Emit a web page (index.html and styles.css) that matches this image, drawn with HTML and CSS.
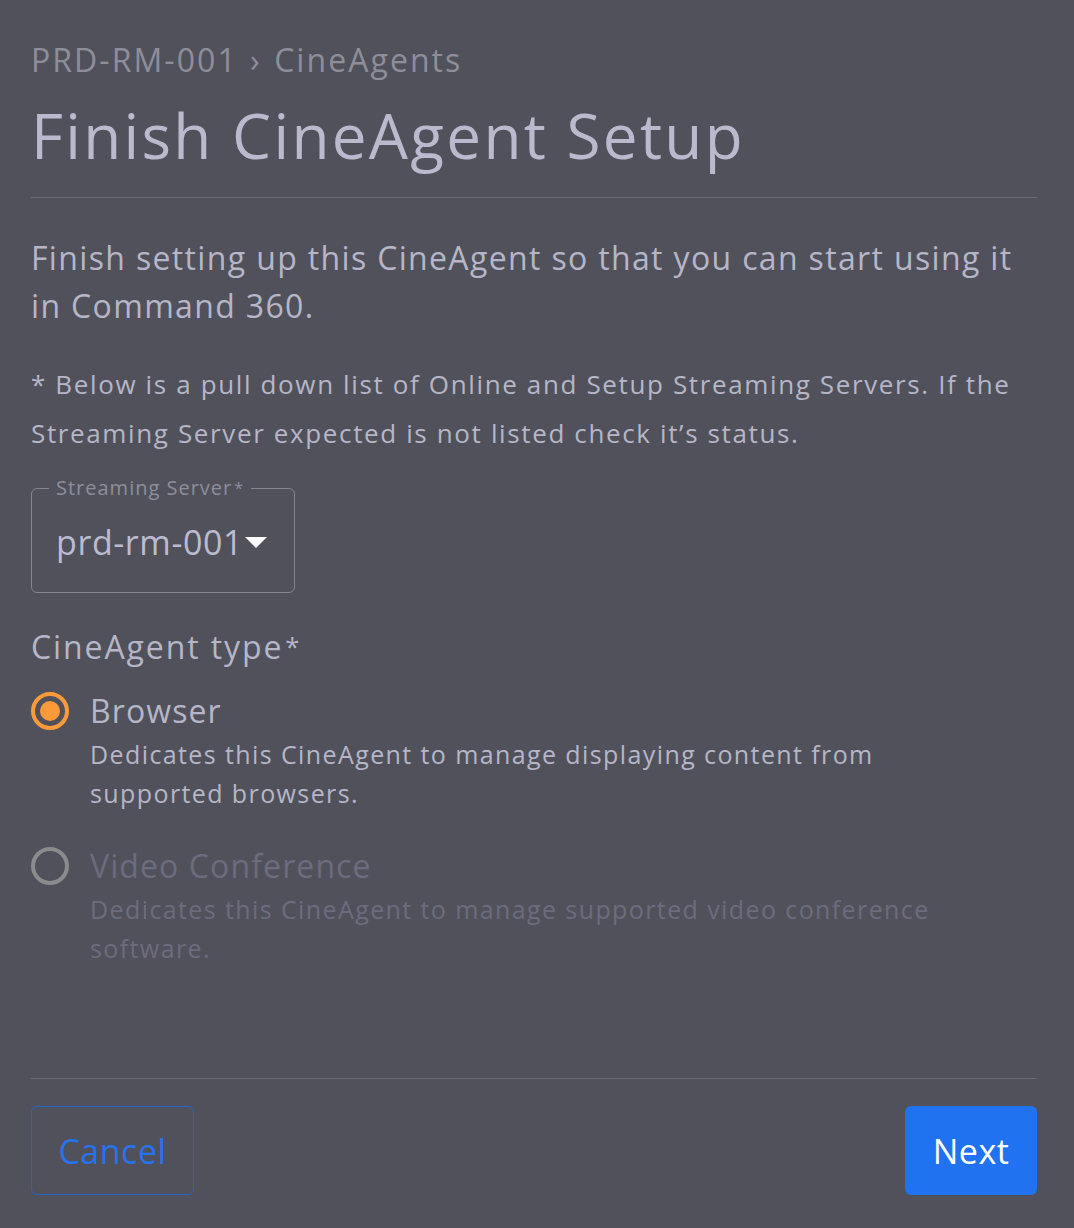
FILE: index.html
```html
<!DOCTYPE html>
<html>
<head>
<meta charset="utf-8">
<link rel="stylesheet" href="styles.css">
</head>
<body>
<div class="page">
  <div class="content">
    <nav class="crumbs">PRD-RM-001 <span class="sep">›</span> CineAgents</nav>
    <h1 class="title">Finish CineAgent Setup</h1>
    <hr class="rule">
    <p class="lead">Finish setting up this CineAgent so that you can start using it in Command 360.</p>
    <p class="note">* Below is a pull down list of Online and Setup Streaming Servers. If the Streaming Server expected is not listed check it’s status.</p>
    <div class="select">
      <span class="select-label">Streaming Server<span class="req">*</span></span>
      <span class="select-value">prd-rm-001</span>
      <span class="caret"></span>
    </div>
    <div class="group-label">CineAgent type<span class="req">*</span></div>
    <div class="option">
      <span class="radio checked"><span class="dot"></span></span>
      <div class="option-text">
        <div class="option-title">Browser</div>
        <div class="option-desc">Dedicates this CineAgent to manage displaying content from supported browsers.</div>
      </div>
    </div>
    <div class="option disabled">
      <span class="radio"></span>
      <div class="option-text">
        <div class="option-title">Video Conference</div>
        <div class="option-desc">Dedicates this CineAgent to manage supported video conference software.</div>
      </div>
    </div>
  </div>
  <div class="footer">
    <hr class="rule">
    <div class="actions">
      <button class="btn btn-outline">Cancel</button>
      <button class="btn btn-primary">Next</button>
    </div>
  </div>
</div>
</body>
</html>
```
FILE: styles.css
```css
html, body {
  margin: 0;
  padding: 0;
  background: #51515b;
}
body {
  font-family: "Open Sans", "Noto Sans", sans-serif;
  color: #b6b6c8;
}
.page {
  box-sizing: border-box;
  min-height: 1228px;
  height: 1228px;
  padding: 40px 37px 33px 31px;
  display: flex;
  flex-direction: column;
}
.content {
  flex: 1;
}
.crumbs {
  font-size: 32px;
  line-height: 40px;
  color: #8e8e9a;
  letter-spacing: 2.05px;
}
.crumbs .sep {
  margin: 0 2px;
}
.title {
  margin: 19px 0 0;
  font-size: 62px;
  line-height: 72px;
  font-weight: 400;
  color: #babace;
  letter-spacing: 2.3px;
}
.rule {
  border: 0;
  border-top: 1px solid #6b6b73;
  margin: 26px 0 0;
  height: 0;
}
.lead {
  margin: 36px 0 0;
  font-size: 32px;
  line-height: 48px;
  letter-spacing: 1.35px;
}
.note {
  margin: 30px 0 0;
  font-size: 26px;
  line-height: 49px;
  letter-spacing: 1.63px;
}
.select {
  position: relative;
  box-sizing: border-box;
  width: 264px;
  height: 105px;
  margin-top: 30px;
  border: 1px solid #85858d;
  border-radius: 6px;
  padding: 0 24px;
  display: flex;
  align-items: center;
}
.select-label {
  position: absolute;
  top: -13px;
  left: 17px;
  padding: 0 7px;
  background: #51515b;
  font-size: 20px;
  line-height: 24px;
  color: #8e8e9a;
  letter-spacing: 1px;
}
.req {
  font-size: 0.8em;
  vertical-align: top;
  margin-left: 2px;
}
.select-value {
  font-size: 34px;
  line-height: 40px;
  color: #bcbcd0;
  letter-spacing: 0.6px;
  margin-top: 2px;
}
.caret {
  width: 0;
  height: 0;
  border-left: 11px solid transparent;
  border-right: 11px solid transparent;
  border-top: 11px solid #ffffff;
  margin-left: 2px;
  margin-top: 4px;
}
.group-label {
  margin-top: 34px;
  font-size: 32px;
  line-height: 40px;
  color: #b6b6c8;
  letter-spacing: 1.9px;
}
.option {
  display: flex;
  margin-top: 24px;
}
.option + .option {
  margin-top: 33px;
}
.radio {
  box-sizing: border-box;
  flex: none;
  width: 38px;
  height: 38px;
  margin-top: 1px;
  border-radius: 50%;
  border: 4px solid #8b8b8d;
  display: flex;
  align-items: center;
  justify-content: center;
}
.radio.checked {
  border-color: #fb9a3b;
}
.dot {
  width: 20px;
  height: 20px;
  border-radius: 50%;
  background: #fb9a3b;
}
.option-text {
  margin-left: 21px;
}
.option-title {
  font-size: 32px;
  line-height: 40px;
  letter-spacing: 1.1px;
}
.option-desc {
  margin-top: 4px;
  font-size: 25px;
  line-height: 39px;
  max-width: 860px;
  letter-spacing: 1.4px;
}
.option.disabled .option-title,
.option.disabled .option-desc {
  color: #6c6c7e;
}
.actions {
  display: flex;
  justify-content: space-between;
  margin-top: 27px;
}
.btn {
  font-family: inherit;
  height: 89px;
  border-radius: 6px;
  font-size: 34px;
  letter-spacing: 0.5px;
  padding: 0;
  cursor: pointer;
}
.btn-outline {
  width: 163px;
  background: transparent;
  border: 1px solid #2466c8;
  color: #2673ee;
}
.btn-primary {
  width: 132px;
  background: #2172f0;
  border: 0;
  color: #ffffff;
}
```
